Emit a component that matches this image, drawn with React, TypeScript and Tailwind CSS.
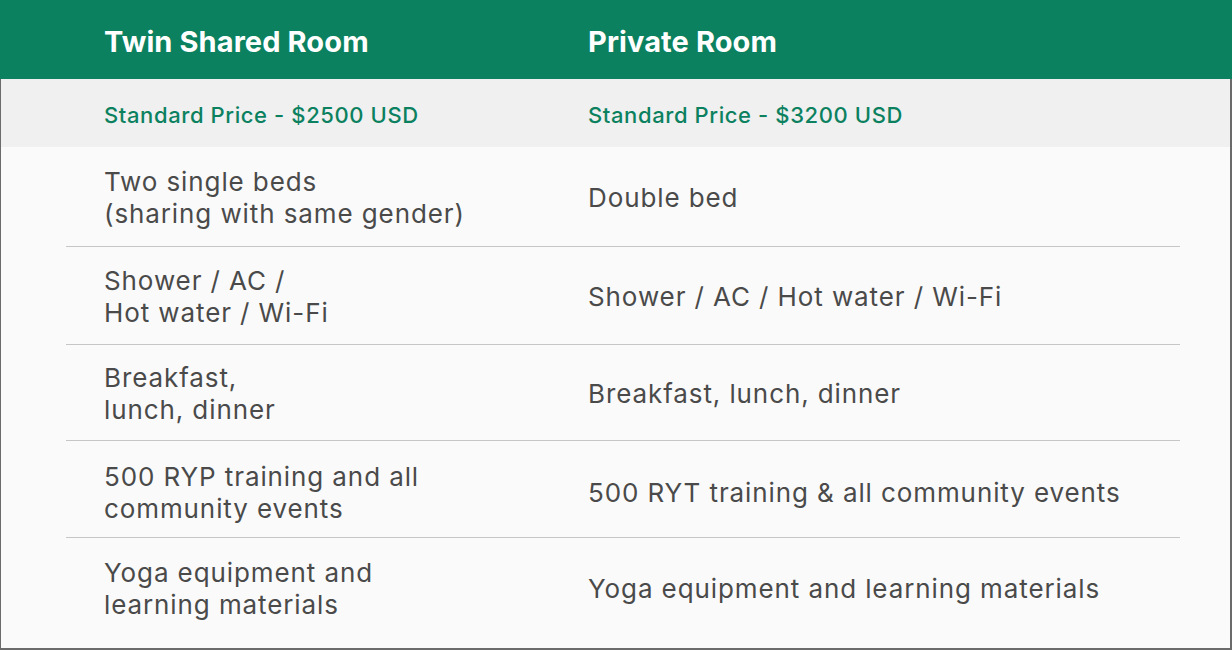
const rows = [
  {
    left: ["Two single beds", "(sharing with same gender)"],
    right: "Double bed",
    h: "h-[100px] pt-[2px]",
  },
  {
    left: ["Shower / AC /", "Hot water / Wi-Fi"],
    right: "Shower / AC / Hot water / Wi-Fi",
    h: "h-[98px] pt-[2px]",
  },
  {
    left: ["Breakfast,", "lunch, dinner"],
    right: "Breakfast, lunch, dinner",
    h: "h-[96px] pt-[2px]",
  },
  {
    left: ["500 RYP training and all", "community events"],
    right: "500 RYT training & all community events",
    h: "h-[97px] pt-[8px]",
  },
  {
    left: ["Yoga equipment and", "learning materials"],
    right: "Yoga equipment and learning materials",
    h: "flex-1 pb-[9px]",
  },
];

export default function App() {
  return (
    <div
      className="w-[1232px] h-[650px] flex flex-col bg-[#fafafa] overflow-hidden"
      style={{ fontFamily: "Inter, 'Noto Sans', sans-serif" }}
    >
      {/* header */}
      <div className="h-[79px] shrink-0 flex items-center bg-[#0c8160] text-white font-bold text-[29px] tracking-[0.1px] pt-[4px]">
        <div className="w-[588px] pl-[104px]">Twin Shared Room</div>
        <div>Private Room</div>
      </div>

      <div className="flex-1 flex flex-col border-l border-r-2 border-b-2 border-[#6b6b6b]">
        {/* price row */}
        <div className="h-[68px] shrink-0 flex items-center bg-[#f0f0f0] text-[#0c8160] text-[22px] font-medium tracking-[0.6px] pt-[5px]">
          <div className="w-[587px] pl-[103px]">Standard Price - $2500 USD</div>
          <div>Standard Price - $3200 USD</div>
        </div>

        <div className="flex-1 flex flex-col pl-[65px] pr-[50px]">
          {rows.map((r, i) => (
            <div
              key={i}
              className={`${r.h} flex items-center text-[#4a4a4a] text-[26px] leading-[32px] tracking-[0.9px] ${
                i < rows.length - 1 ? "border-b border-[#c6c6c6]" : ""
              }`}
            >
              <div className="w-[484px] pl-[38px]">
                {r.left.map((l, j) => (
                  <div key={j}>{l}</div>
                ))}
              </div>
              <div className="pl-[38px]">{r.right}</div>
            </div>
          ))}
        </div>
      </div>
    </div>
  );
}
